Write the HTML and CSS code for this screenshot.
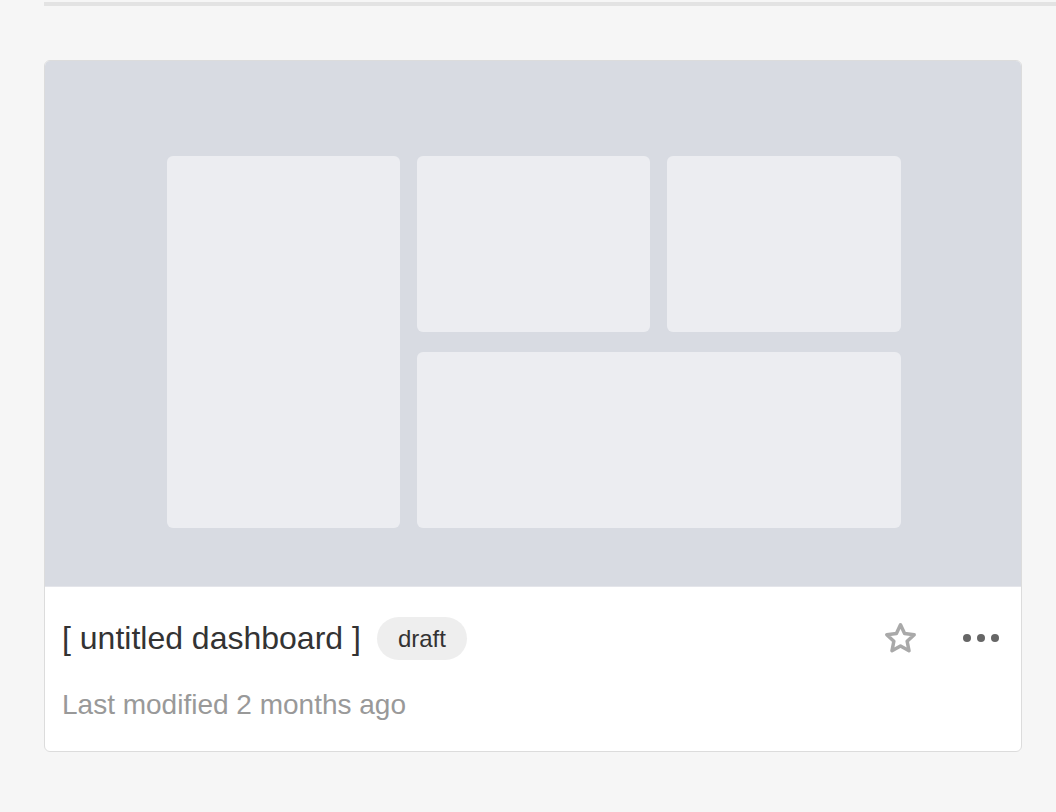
FILE: index.html
```html
<!DOCTYPE html>
<html>
<head>
<meta charset="utf-8">
<link rel="stylesheet" href="styles.css">
</head>
<body>
<div class="page">
  <div class="divider"></div>
  <div class="card">
    <div class="preview">
      <div class="grid">
        <div class="tile tall"></div>
        <div class="tile"></div>
        <div class="tile"></div>
        <div class="tile wide"></div>
      </div>
    </div>
    <div class="footer">
      <div class="title-row">
        <div class="title">
          <span class="name">[ untitled dashboard ]</span>
          <span class="badge">draft</span>
        </div>
        <div class="actions">
          <svg class="star" width="37" height="35" viewBox="0 0 24 24"><path d="M12 2.6l2.8 6 6.6.8-4.85 4.5 1.3 6.5L12 17.1l-5.85 3.3 1.3-6.5L2.6 9.4l6.6-.8z" fill="none" stroke="#a9a9a9" stroke-width="2.4" stroke-linejoin="round"/></svg>
          <div class="dots"><span></span><span></span><span></span></div>
        </div>
      </div>
      <div class="meta">Last modified 2 months ago</div>
    </div>
  </div>
</div>
</body>
</html>
```
FILE: styles.css
```css
html, body {
  margin: 0;
  padding: 0;
  background: #f6f6f6;
  font-family: "Liberation Sans", Arial, sans-serif;
}
.page {
  padding: 2px 0 0 44px;
}
.divider {
  height: 4px;
  background: #e3e3e3;
}
.card {
  margin-top: 54px;
  width: 976px;
  border: 1px solid #dcdcdc;
  border-radius: 6px;
  background: #fff;
  overflow: hidden;
}
.preview {
  background: #d8dbe2;
  height: 526px;
  padding: 95px 0 0 0;
  box-sizing: border-box;
  border-bottom: 1px solid #e4e5ea;
}
.grid {
  width: 734px;
  margin: 0 0 0 122px;
  display: grid;
  grid-template-columns: 233px 233px 234px;
  grid-template-rows: 176px 176px;
  column-gap: 17px;
  row-gap: 20px;
}
.tile {
  background: #ecedf1;
  border-radius: 6px;
}
.tall { grid-row: 1 / span 2; }
.wide { grid-column: 2 / span 2; }
.footer {
  padding: 29px 22px 30px 17px;
}
.title-row {
  display: flex;
  align-items: center;
  justify-content: space-between;
  height: 44px;
}
.title {
  display: flex;
  align-items: center;
  gap: 16px;
}
.name {
  font-size: 32px;
  color: #333;
}
.badge {
  display: inline-block;
  background: #eeeeee;
  color: #333;
  font-size: 24px;
  padding: 0 21px;
  line-height: 43px;
  border-radius: 22px;
}
.actions {
  display: flex;
  align-items: center;
  gap: 44px;
}
.star { display: block; }
.dots {
  display: flex;
  gap: 6px;
}
.dots span {
  width: 8px;
  height: 8px;
  border-radius: 50%;
  background: #666;
}
.meta {
  margin-top: 29px;
  font-size: 28px;
  line-height: 32px;
  color: #999;
}
```
